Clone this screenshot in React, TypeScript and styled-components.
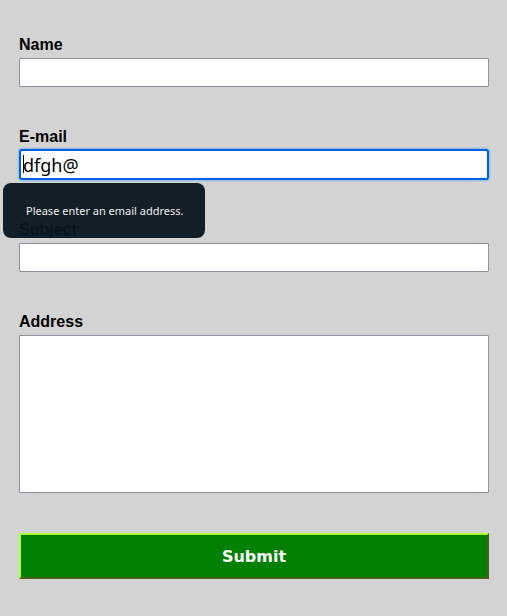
import React from 'react';
import styled, { createGlobalStyle, css } from 'styled-components';

const GlobalStyle = createGlobalStyle`
  html, body {
    margin: 0;
    padding: 0;
    background: #d3d3d3;
  }
`;

const Form = styled.form`
  box-sizing: border-box;
  width: 100%;
  padding: 35px 18px 37px 19px;
  display: flex;
  flex-direction: column;
  gap: 40px;
  font-family: 'Liberation Sans', Arial, sans-serif;
`;

const Field = styled.div<{ $raised?: boolean }>`
  display: flex;
  flex-direction: column;
  gap: 4px;

  ${({ $raised }) =>
    $raised &&
    css`
      position: relative;
      z-index: 5;
    `}
`;

const Label = styled.label`
  padding-top: 1px;
  font-size: 16px;
  font-weight: bold;
  line-height: 18px;
  color: #000;
`;

const Input = styled.input<{ $focused?: boolean }>`
  box-sizing: border-box;
  width: 100%;
  height: 29px;
  margin: 0;
  padding: 0 3px;
  border: 1px solid #8f8f9d;
  border-radius: 1px;
  background: #fff;
  font-family: 'Noto Sans', 'Open Sans', sans-serif;
  font-size: 18px;
  color: #000;
  outline: none;

  ${({ $focused }) =>
    $focused &&
    css`
      height: 31px;
      margin-top: -1px;
      border: 2px solid #0060df;
      border-radius: 3px;
      padding-left: 2px;
      box-shadow: 0 0 0 1.5px #9cc4de;
    `}
`;

const InputWrap = styled.div`
  position: relative;
`;

const Caret = styled.span`
  position: absolute;
  left: 4px;
  bottom: 7px;
  width: 1px;
  height: 18px;
  background: #000;
`;

const TextArea = styled.textarea`
  box-sizing: border-box;
  width: 100%;
  height: 158px;
  margin: 0;
  border: 1px solid #8f8f9d;
  border-radius: 1px;
  background: #fff;
  resize: none;
  outline: none;
`;

const Tooltip = styled.div`
  position: absolute;
  left: -16px;
  top: 56px;
  box-sizing: border-box;
  width: 202px;
  height: 55px;
  padding: 0 0 0 23px;
  display: flex;
  align-items: center;
  border-radius: 8px;
  background: rgba(9, 20, 30, 0.95);
  color: #ededed;
  font-family: 'Noto Sans', 'Open Sans', sans-serif;
  font-size: 11px;
`;

const SubmitButton = styled.button`
  box-sizing: border-box;
  width: 100%;
  height: 46px;
  margin: 0;
  border: 2px outset #adff2f;
  border-right-color: #86b521;
  border-bottom-color: #86b521;
  background: #008000;
  color: #fff;
  font-family: 'DejaVu Sans', Verdana, sans-serif;
  font-size: 16px;
  font-weight: bold;
  cursor: pointer;
`;

export default function App() {
  return (
    <>
      <GlobalStyle />
      <Form onSubmit={(e) => e.preventDefault()}>
        <Field>
          <Label htmlFor="name">Name</Label>
          <Input id="name" type="text" />
        </Field>
        <Field $raised>
          <Label htmlFor="email">E-mail</Label>
          <InputWrap>
            <Input id="email" type="text" defaultValue="dfgh@" $focused />
            <Caret />
          </InputWrap>
          <Tooltip>Please enter an email address.</Tooltip>
        </Field>
        <Field>
          <Label htmlFor="subject">Subject</Label>
          <Input id="subject" type="text" />
        </Field>
        <Field>
          <Label htmlFor="address">Address</Label>
          <TextArea id="address" />
        </Field>
        <SubmitButton type="submit">Submit</SubmitButton>
      </Form>
    </>
  );
}
